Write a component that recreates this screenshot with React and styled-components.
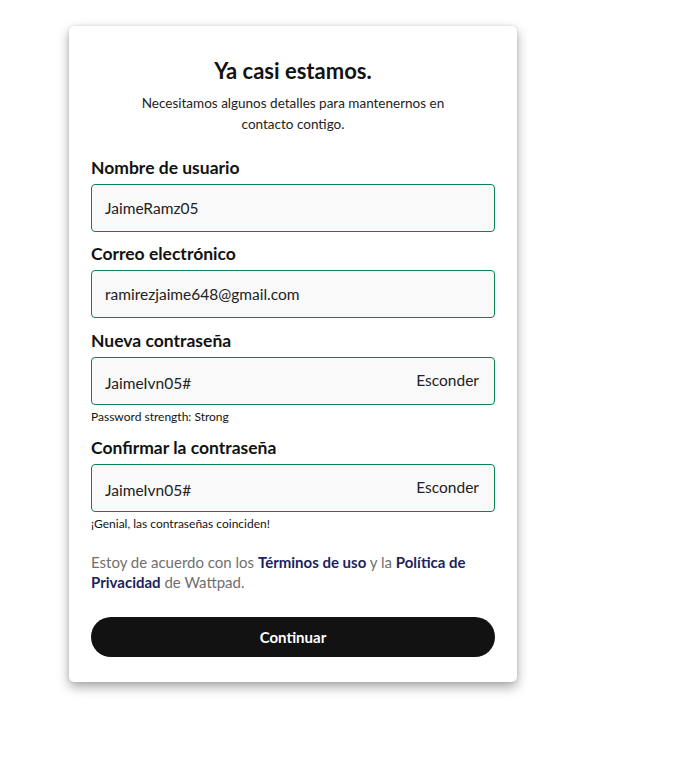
import styled, { createGlobalStyle } from "styled-components";

const GlobalStyle = createGlobalStyle`
    body {
        margin: 0;
        background: #ffffff;
        font-family: Lato, "Noto Sans", sans-serif;
        color: #121212;
    }
`;

const Page = styled.div`
    width: 686px;
    min-height: 781px;
    padding: 26px 0 0 69px;
    box-sizing: border-box;
`;

const Card = styled.form`
    width: 448px;
    box-sizing: border-box;
    padding: 31px 22px 25px;
    background: #fff;
    border-radius: 5px;
    box-shadow: 0 5px 12px rgba(0, 0, 0, 0.35), 0 0 3px rgba(0, 0, 0, 0.12);
`;

const Title = styled.h2`
    margin: 0;
    font-size: 22px;
    line-height: 28px;
    font-weight: 700;
    text-align: center;
`;

const Subtitle = styled.p`
    margin: 8px auto 0;
    width: 330px;
    font-size: 13.5px;
    line-height: 21px;
    text-align: center;
    color: #222;
`;

const Field = styled.div`
    margin-top: ${(p) => p.$top || 12}px;
`;

const Label = styled.label`
    display: block;
    font-size: 17.5px;
    line-height: 20px;
    font-weight: 700;
    margin-bottom: 6px;
`;

const InputBox = styled.div`
    height: 48px;
    box-sizing: border-box;
    display: flex;
    align-items: center;
    justify-content: space-between;
    padding: 0 15px 0 13px;
    border: 1px solid #0b8251;
    border-radius: 4px;
    background: #f9f9f9;
`;

const Value = styled.span`
    font-size: 15.5px;
    color: #222;
    margin-top: ${(p) => (p.$pw ? 3 : 0)}px;
`;

const Toggle = styled.span`
    font-size: 15.5px;
    color: #222;
    margin-top: -3px;
`;

const Hint = styled.div`
    font-size: 12px;
    line-height: 16px;
    margin-top: 4px;
    color: #121212;
`;

const Terms = styled.p`
    margin: 20px 0 0;
    font-size: 15px;
    line-height: 20px;
    color: #6f6f6f;
`;

const TermsLink = styled.a`
    color: #221f5e;
    font-weight: 700;
    text-decoration: none;
`;

const Button = styled.button`
    display: block;
    width: 100%;
    height: 40px;
    margin-top: 25px;
    border: none;
    border-radius: 20px;
    background: #121212;
    color: #fff;
    font-family: inherit;
    font-size: 15px;
    font-weight: 700;
`;

const fields = [
    { label: "Nombre de usuario", value: "JaimeRamz05" },
    { label: "Correo electrónico", value: "ramirezjaime648@gmail.com" },
    { label: "Nueva contraseña", value: "JaimeIvn05#", password: true, hint: "Password strength: Strong" },
    { label: "Confirmar la contraseña", value: "JaimeIvn05#", password: true, hint: "¡Genial, las contraseñas coinciden!" },
];

const margins = [23, 12, 13, 13];

const App = () => {
    return (
        <Page>
            <GlobalStyle />
            <Card>
                <Title>Ya casi estamos.</Title>
                <Subtitle>Necesitamos algunos detalles para mantenernos en contacto contigo.</Subtitle>

                {fields.map((f, i) => (
                    <Field key={f.label} $top={margins[i]}>
                        <Label>{f.label}</Label>
                        <InputBox>
                            <Value $pw={f.password}>{f.value}</Value>
                            {f.password && <Toggle>Esconder</Toggle>}
                        </InputBox>
                        {f.hint && <Hint>{f.hint}</Hint>}
                    </Field>
                ))}

                <Terms>
                    Estoy de acuerdo con los <TermsLink>Términos de uso</TermsLink> y la{" "}
                    <TermsLink>Política de Privacidad</TermsLink> de Wattpad.
                </Terms>

                <Button type="button">Continuar</Button>
            </Card>
        </Page>
    );
};

export default App;
